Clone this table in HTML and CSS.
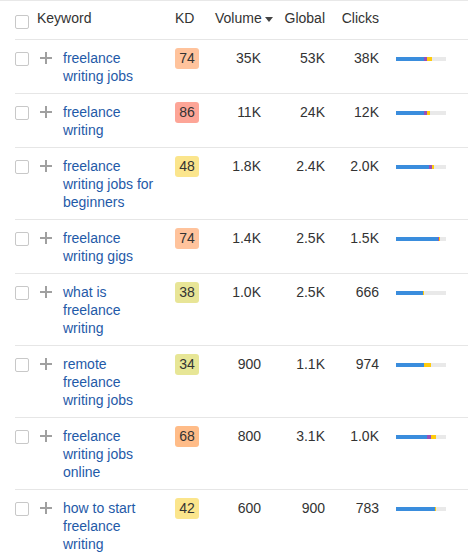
FILE: index.html
```html
<!DOCTYPE html>
<html>
<head>
<meta charset="utf-8">
<link rel="stylesheet" href="styles.css">
</head>
<body>
<div class="table">
  <div class="head">
    <span class="cb"></span>
    <span class="h-kw">Keyword</span>
    <span class="h-kd">KD</span>
    <span class="num h-vol">Volume<span class="caret"></span></span>
    <span class="num">Global</span>
    <span class="num">Clicks</span>
    <span></span>
  </div>

  <div class="row">
    <span class="cb"></span><span class="plus"></span>
    <a class="kw">freelance writing jobs</a>
    <span><span class="kd kd-74">74</span></span>
    <span class="num">35K</span><span class="num">53K</span><span class="num">38K</span>
    <span class="barcell"><span class="bar"><i class="b" style="width:28px"></i><i class="p" style="width:3px"></i><i class="y" style="width:5px"></i></span></span>
  </div>

  <div class="row">
    <span class="cb"></span><span class="plus"></span>
    <a class="kw">freelance writing</a>
    <span><span class="kd kd-86">86</span></span>
    <span class="num">11K</span><span class="num">24K</span><span class="num">12K</span>
    <span class="barcell"><span class="bar"><i class="b" style="width:28px"></i><i class="p" style="width:3px"></i><i class="y" style="width:3px"></i></span></span>
  </div>

  <div class="row">
    <span class="cb"></span><span class="plus"></span>
    <a class="kw">freelance writing jobs for beginners</a>
    <span><span class="kd kd-48">48</span></span>
    <span class="num">1.8K</span><span class="num">2.4K</span><span class="num">2.0K</span>
    <span class="barcell"><span class="bar"><i class="b" style="width:33px"></i><i class="p" style="width:3px"></i><i class="y" style="width:2px"></i></span></span>
  </div>

  <div class="row">
    <span class="cb"></span><span class="plus"></span>
    <a class="kw">freelance writing gigs</a>
    <span><span class="kd kd-74">74</span></span>
    <span class="num">1.4K</span><span class="num">2.5K</span><span class="num">1.5K</span>
    <span class="barcell"><span class="bar"><i class="b" style="width:42px"></i><i class="p" style="width:1px"></i><i class="y" style="width:1px"></i></span></span>
  </div>

  <div class="row">
    <span class="cb"></span><span class="plus"></span>
    <a class="kw">what is freelance writing</a>
    <span><span class="kd kd-38">38</span></span>
    <span class="num">1.0K</span><span class="num">2.5K</span><span class="num">666</span>
    <span class="barcell"><span class="bar"><i class="b" style="width:27px"></i><i class="y" style="width:1px"></i></span></span>
  </div>

  <div class="row">
    <span class="cb"></span><span class="plus"></span>
    <a class="kw">remote freelance writing jobs</a>
    <span><span class="kd kd-34">34</span></span>
    <span class="num">900</span><span class="num">1.1K</span><span class="num">974</span>
    <span class="barcell"><span class="bar"><i class="b" style="width:28px"></i><i class="y" style="width:7px"></i></span></span>
  </div>

  <div class="row">
    <span class="cb"></span><span class="plus"></span>
    <a class="kw">freelance writing jobs online</a>
    <span><span class="kd kd-68">68</span></span>
    <span class="num">800</span><span class="num">3.1K</span><span class="num">1.0K</span>
    <span class="barcell"><span class="bar"><i class="b" style="width:31px"></i><i class="p" style="width:4px"></i><i class="y" style="width:5px"></i></span></span>
  </div>

  <div class="row">
    <span class="cb"></span><span class="plus"></span>
    <a class="kw">how to start freelance writing</a>
    <span><span class="kd kd-42">42</span></span>
    <span class="num">600</span><span class="num">900</span><span class="num">783</span>
    <span class="barcell"><span class="bar"><i class="b" style="width:39px"></i><i class="y" style="width:1px"></i></span></span>
  </div>
</div>
</body>
</html>
```
FILE: styles.css
```css
html, body {
  margin: 0;
  padding: 0;
  background: #fff;
}
body {
  font-family: "Liberation Sans", Arial, sans-serif;
  font-size: 14px;
  color: #333;
}
.table {
  border-top: 1px solid #e8e8e8;
}
.head {
  margin-left: 15px;
  display: grid;
  grid-template-columns: 22px 138px 40px 46px 64px 54px 1fr;
  align-items: start;
  padding: 8px 0 10px;
  line-height: 18px;
  border-bottom: 1px solid #e6e6e6;
  color: #333;
}
.head .cb {
  margin-top: 6px;
}
.h-vol {
  position: relative;
}
.caret {
  position: absolute;
  right: -12px;
  top: 8px;
  width: 0;
  height: 0;
  border-left: 4px solid transparent;
  border-right: 4px solid transparent;
  border-top: 5px solid #444;
}
.row {
  margin-left: 15px;
  display: grid;
  grid-template-columns: 25px 23px 112px 40px 46px 64px 54px 1fr;
  align-items: start;
  padding: 9px 0 8px;
  line-height: 18px;
  border-bottom: 1px solid #e6e6e6;
}
.cb {
  display: block;
  width: 12px;
  height: 12px;
  border: 1px solid #c8c8c8;
  border-radius: 2px;
  background: #fff;
}
.row .cb {
  margin-top: 3px;
}
.plus {
  display: block;
  position: relative;
  width: 12px;
  height: 12px;
  margin-top: 3px;
}
.plus::before, .plus::after {
  content: "";
  position: absolute;
  background: #a0a0a0;
}
.plus::before {
  left: 0;
  top: 5px;
  width: 12px;
  height: 2px;
}
.plus::after {
  left: 5px;
  top: 0;
  width: 2px;
  height: 12px;
}
.kw {
  color: #1f5aa8;
  width: 100px;
  text-decoration: none;
}
.kd {
  display: inline-block;
  width: 24px;
  height: 21px;
  line-height: 21px;
  margin-top: -2px;
  border-radius: 3px;
  text-align: center;
  color: #333;
}
.kd-74 { background: #ffc39c; }
.kd-86 { background: #fda597; }
.kd-48 { background: #fbe58c; }
.kd-42 { background: #fbe58c; }
.kd-38 { background: #e8e597; }
.kd-34 { background: #e7e696; }
.kd-68 { background: #ffbc88; }
.num {
  text-align: right;
  color: #333;
}
.barcell {
  padding-left: 17px;
}
.bar {
  display: flex;
  width: 50px;
  height: 4px;
  margin-top: 8px;
  background: #e9e9e9;
}
.bar i {
  display: block;
  height: 4px;
}
.bar .b { background: #3a8ddd; }
.bar .p { background: #9b4fb5; }
.bar .y { background: #ffcb0d; }
```
